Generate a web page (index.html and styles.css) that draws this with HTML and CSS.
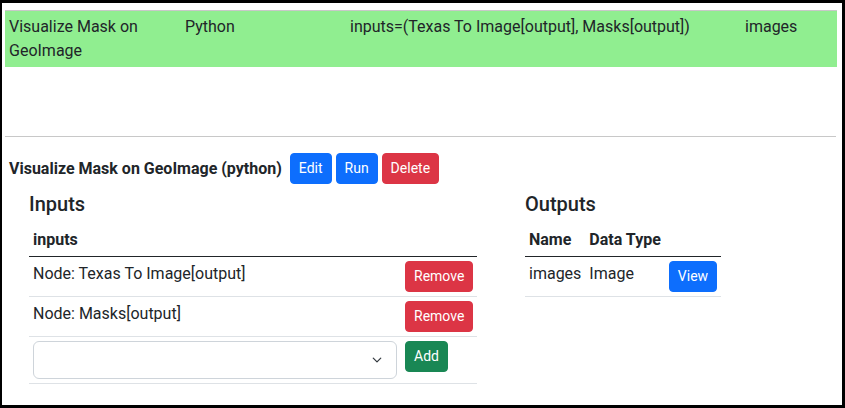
FILE: index.html
```html
<!DOCTYPE html>
<html>
<head>
<meta charset="utf-8">
<link rel="stylesheet" href="styles.css">
</head>
<body>
<div class="frame">
  <table class="nodes">
    <colgroup>
      <col class="c1"><col class="c2"><col class="c3"><col class="c4">
    </colgroup>
    <tr class="selected">
      <td>Visualize Mask on GeoImage</td>
      <td>Python</td>
      <td>inputs=(Texas To Image[output], Masks[output])</td>
      <td>images</td>
    </tr>
  </table>
  <hr class="sep">
  <div class="title-row">
    <span class="title">Visualize Mask on GeoImage (python)</span>
    <button class="btn blue">Edit</button>
    <button class="btn blue">Run</button>
    <button class="btn red">Delete</button>
  </div>
  <div class="io">
    <section class="inputs">
      <h5 class="sec-title">Inputs</h5>
      <table class="tbl in-tbl">
        <thead>
          <tr><th colspan="2">inputs</th></tr>
        </thead>
        <tbody>
          <tr>
            <td class="main">Node: Texas To Image[output]</td>
            <td class="act"><button class="btn red">Remove</button></td>
          </tr>
          <tr>
            <td class="main">Node: Masks[output]</td>
            <td class="act"><button class="btn red">Remove</button></td>
          </tr>
          <tr>
            <td>
              <div class="select">
                <svg class="chev" width="14" height="10" viewBox="0 0 16 16"><path d="M2 5l6 6 6-6" fill="none" stroke="#343a40" stroke-width="2" stroke-linecap="round" stroke-linejoin="round"/></svg>
              </div>
            </td>
            <td class="act"><button class="btn green">Add</button></td>
          </tr>
        </tbody>
      </table>
    </section>
    <section class="outputs">
      <h5 class="sec-title">Outputs</h5>
      <table class="tbl out-tbl">
        <thead>
          <tr><th>Name</th><th>Data Type</th><th></th></tr>
        </thead>
        <tbody>
          <tr>
            <td class="main">images</td>
            <td class="main">Image</td>
            <td><button class="btn blue">View</button></td>
          </tr>
        </tbody>
      </table>
    </section>
  </div>
</div>
</body>
</html>
```

FILE: styles.css
```css
html, body {
  margin: 0;
  padding: 0;
  background: #fff;
}
body {
  font-family: Roboto, "Liberation Sans", sans-serif;
  font-size: 16px;
  line-height: 24px;
  color: #212529;
}
.frame {
  width: 845px;
  height: 408px;
  box-sizing: border-box;
  border-style: solid;
  border-color: #000;
  border-width: 3px 3px 3px 2px;
  padding: 7px 5px 0 3px;
  overflow: hidden;
}
table {
  border-collapse: collapse;
}
.nodes {
  width: 832px;
  table-layout: fixed;
}
.nodes .c1 { width: 176px; }
.nodes .c2 { width: 165px; }
.nodes .c3 { width: 395px; }
.nodes .c4 { width: 96px; }
.nodes tr.selected {
  background: #90ee90;
  border-top: 1px solid #c8c8c8;
}
.nodes td {
  padding: 4px;
  vertical-align: top;
}
.sep {
  margin: 69px 0 0 0;
  width: 831px;
  border: 0;
  border-top: 1px solid #c8c8c8;
  height: 0;
}
.title-row {
  display: flex;
  align-items: center;
  gap: 4px;
  margin-top: 16px;
  padding-left: 4px;
}
.title {
  font-weight: 700;
  font-size: 16px;
  margin-right: 4px;
}
.btn {
  font-family: Roboto, "Liberation Sans", sans-serif;
  font-size: 14px;
  line-height: 21px;
  padding: 4px 8px;
  border: 1px solid transparent;
  border-radius: 4px;
  color: #fff;
  cursor: pointer;
}
.btn.blue { background: #0d6efd; border-color: #0d6efd; }
.btn.red { background: #dc3545; border-color: #dc3545; }
.btn.green { background: #198754; border-color: #198754; }
.io {
  display: flex;
  align-items: flex-start;
  gap: 48px;
  padding-left: 24px;
  margin-top: 8px;
}
.inputs {
  width: 448px;
}
.sec-title {
  margin: 0 0 8px 0;
  font-size: 20px;
  line-height: 24px;
  font-weight: 500;
}
.tbl {
  width: 100%;
}
.out-tbl {
  width: auto;
}
.tbl th {
  text-align: left;
  font-weight: 700;
  padding: 4px;
  border-bottom: 1px solid #212529;
}
.tbl td {
  padding: 4px;
  vertical-align: top;
  border-bottom: 1px solid #dee2e6;
}
.tbl td.main {
  padding-top: 5px;
}
.in-tbl td.act {
  width: 68px;
}
.select {
  box-sizing: border-box;
  height: 38px;
  width: 364px;
  border: 1px solid #ced4da;
  border-radius: 6px;
  background: #fff;
  display: flex;
  align-items: center;
  justify-content: flex-end;
  padding-right: 12px;
}
.chev {
  display: block;
}
```
